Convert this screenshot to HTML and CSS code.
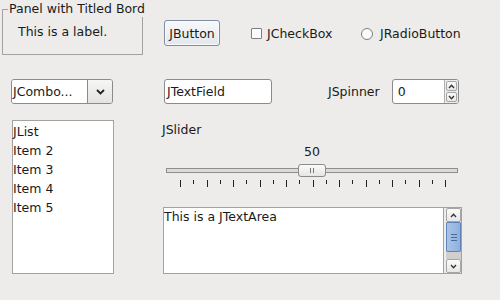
FILE: index.html
```html
<!DOCTYPE html>
<html>
<head>
<meta charset="utf-8">
<link rel="stylesheet" href="styles.css">
</head>
<body>
<div class="win">
  <div class="row r1">
    <div class="titled">
      <div class="tb"><span class="lbl">This is a label.</span></div>
      <div class="ttl">Panel with Titled Bord</div>
    </div>
    <div class="btn">JButton</div>
    <div class="check"><span class="box"></span><span>JCheckBox</span></div>
    <div class="radio"><span class="circ"></span><span>JRadioButton</span></div>
  </div>
  <div class="row r2">
    <div class="combo">
      <span class="ctext">JCombo...</span>
      <span class="carrow"><svg width="9" height="6" viewBox="0 0 9 6"><path d="M1 1 L4.5 4.5 L8 1" fill="none" stroke="#222" stroke-width="1.8"/></svg></span>
    </div>
    <div class="tf">JTextField</div>
    <span class="spinlbl">JSpinner</span>
    <div class="spinner">
      <span class="sval">0</span>
      <span class="sbtns">
        <span class="sbtn"><svg width="7" height="5" viewBox="0 0 7 5"><path d="M1 4 L3.5 1.2 L6 4" fill="none" stroke="#333" stroke-width="1.3"/></svg></span>
        <span class="sbtn"><svg width="7" height="5" viewBox="0 0 7 5"><path d="M1 1 L3.5 3.8 L6 1" fill="none" stroke="#333" stroke-width="1.3"/></svg></span>
      </span>
    </div>
  </div>
  <div class="row r3">
    <div class="list">
      <div>JList</div>
      <div>Item 2</div>
      <div>Item 3</div>
      <div>Item 4</div>
      <div>Item 5</div>
    </div>
    <div class="rcol">
      <div class="sl-label">JSlider</div>
      <div class="sl-val">50</div>
      <div class="slider">
        <div class="track"></div>
        <div class="thumb"><span class="grip"></span><span class="grip"></span></div>
      </div>
      <div class="ticks">
        <span class="tk major"></span><span class="tk"></span><span class="tk major"></span><span class="tk"></span><span class="tk major"></span><span class="tk"></span><span class="tk major"></span><span class="tk"></span><span class="tk major"></span><span class="tk"></span><span class="tk major"></span><span class="tk"></span><span class="tk major"></span><span class="tk"></span><span class="tk major"></span><span class="tk"></span><span class="tk major"></span><span class="tk"></span><span class="tk major"></span><span class="tk"></span><span class="tk major"></span>
      </div>
      <div class="scroll">
        <div class="ta">This is a JTextArea</div>
        <div class="vsb">
          <div class="vbtn"><svg width="7" height="5" viewBox="0 0 7 5"><path d="M1 4 L3.5 1.2 L6 4" fill="none" stroke="#333" stroke-width="1.3"/></svg></div>
          <div class="vthumb"><span class="gl"></span><span class="gl"></span><span class="gl"></span></div>
          <div class="vtrack"></div>
          <div class="vbtn"><svg width="7" height="5" viewBox="0 0 7 5"><path d="M1 1 L3.5 3.8 L6 1" fill="none" stroke="#333" stroke-width="1.3"/></svg></div>
        </div>
      </div>
    </div>
  </div>
</div>
</body>
</html>
```
FILE: styles.css
```css
* { box-sizing: border-box; }
html, body { margin: 0; padding: 0; }
body {
  background: #edeceb;
  font-family: "DejaVu Sans", sans-serif;
  font-size: 12.5px;
  line-height: 15px;
  color: #1a1a1a;
  width: 500px;
  height: 300px;
  overflow: hidden;
}
.win { display: flex; flex-direction: column; }
.row { display: flex; align-items: flex-start; }

/* row 1 */
.r1 { height: 55px; }
.titled {
  position: relative;
  margin-left: 2px;
  width: 141px;
  height: 55px;
}
.tb {
  margin-top: 9px;
  height: 46px;
  border: 1px solid #a3a2a0;
  padding: 14px 0 0 15px;
}
.ttl {
  position: absolute;
  top: 0;
  left: 6px;
  height: 17px;
  padding: 1px 1px 0 1px;
  background: #edeceb;
  white-space: nowrap;
}
.btn {
  margin-left: 21px;
  margin-top: 20px;
  width: 56px;
  height: 26px;
  border: 1px solid #7d8ca4;
  border-radius: 3px;
  background: linear-gradient(#f7f8fa, #e3e7ee);
  display: flex;
  align-items: center;
  justify-content: center;
  box-shadow: inset 0 0 0 1px #f9fbfd;
}
.check {
  margin-left: 31px;
  margin-top: 26px;
  width: 110px;
  display: flex;
  align-items: center;
}
.box {
  width: 11px;
  height: 11px;
  border: 1px solid #7e7e7e;
  border-radius: 1px;
  background: #fbfbfb;
  margin-right: 5px;
}
.radio {
  margin-top: 26px;
  display: flex;
  align-items: center;
}
.circ {
  width: 12px;
  height: 12px;
  border: 1px solid #7e7e7e;
  border-radius: 50%;
  background: #fbfbfb;
  margin-right: 7px;
}

/* row 2 */
.r2 { margin-top: 24px; height: 25px; align-items: center; }
.combo {
  margin-left: 11px;
  width: 102px;
  height: 25px;
  border: 1px solid #8b8b8b;
  border-radius: 3px;
  display: flex;
  overflow: hidden;
}
.ctext {
  width: 76px;
  background: #fff;
  border-right: 1px solid #8b8b8b;
  padding-left: 1px;
  display: flex;
  align-items: center;
}
.carrow {
  flex: 1;
  background: linear-gradient(#f6f6f5, #e4e3e1);
  display: flex;
  align-items: center;
  justify-content: center;
}
.tf {
  margin-left: 51px;
  width: 108px;
  height: 25px;
  border: 1px solid #8b8b8b;
  border-radius: 3px;
  background: #fff;
  padding-left: 2px;
  display: flex;
  align-items: center;
}
.spinlbl { margin-left: 56px; }
.spinner {
  margin-left: 12px;
  width: 67px;
  height: 25px;
  border: 1px solid #8b8b8b;
  border-radius: 3px;
  background: #fff;
  display: flex;
  overflow: hidden;
}
.sval {
  width: 52px;
  border-right: 1px solid #b0b0b0;
  padding-left: 5px;
  display: flex;
  align-items: center;
}
.sbtns {
  flex: 1;
  display: flex;
  flex-direction: column;
  background: #edeceb;
}
.sbtn {
  flex: 1;
  margin: 1px 1px 0 1px;
  border: 1px solid #a5a5a5;
  border-radius: 2px;
  background: linear-gradient(#fafafa, #e8e8e7);
  display: flex;
  align-items: center;
  justify-content: center;
}
.sbtn + .sbtn { margin-bottom: 1px; }

/* row 3 */
.r3 { margin-top: 16px; }
.list {
  margin-left: 12px;
  width: 102px;
  height: 154px;
  border: 1px solid #a3a2a0;
  background: #fff;
  padding-top: 1px;
  line-height: 19px;
}
.rcol {
  margin-left: 48px;
  display: flex;
  flex-direction: column;
}
.sl-label { margin-top: 2px; }
.sl-val {
  margin-top: 7px;
  margin-left: 4px;
  width: 292px;
  text-align: center;
}
.slider {
  position: relative;
  margin-top: 5px;
  margin-left: 4px;
  width: 292px;
  height: 13px;
}
.track {
  margin-top: 4px;
  height: 5px;
  border: 1px solid #8e8e8e;
  background: #dcdbd9;
}
.thumb {
  position: absolute;
  left: 132px;
  top: 0;
  width: 28px;
  height: 13px;
  border: 1px solid #8a8a8a;
  border-radius: 3px;
  background: linear-gradient(#fbfbfb, #e6e5e3);
  display: flex;
  align-items: center;
  justify-content: center;
  gap: 2px;
}
.grip { width: 1px; height: 5px; background: #777; }
.ticks {
  margin-top: 3px;
  margin-left: 18px;
  width: 266px;
  height: 7px;
  display: flex;
  justify-content: space-between;
  align-items: flex-start;
}
.tk { width: 1px; height: 4px; background: #222; }
.tk.major { height: 7px; }
.scroll {
  margin-top: 20px;
  margin-left: 1px;
  width: 299px;
  height: 67px;
  border: 1px solid #a3a2a0;
  display: flex;
}
.ta {
  width: 280px;
  background: #fff;
  border-right: 1px solid #a3a2a0;
  padding-top: 1px;
}
.vsb {
  flex: 1;
  padding-left: 2px;
  display: flex;
  flex-direction: column;
}
.vbtn {
  height: 14px;
  border: 1px solid #a5a5a5;
  border-radius: 2px;
  background: linear-gradient(#fbfbfb, #e7e7e6);
  display: flex;
  align-items: center;
  justify-content: center;
}
.vthumb {
  height: 30px;
  border: 1px solid #5f82b8;
  border-radius: 1px;
  background: linear-gradient(90deg, #a9c3e8, #8fb0de);
  display: flex;
  flex-direction: column;
  align-items: center;
  justify-content: center;
  gap: 2px;
}
.gl { width: 6px; height: 1px; background: #4a6a9c; }
.vtrack { flex: 1; background: #d0cfcd; }
```
